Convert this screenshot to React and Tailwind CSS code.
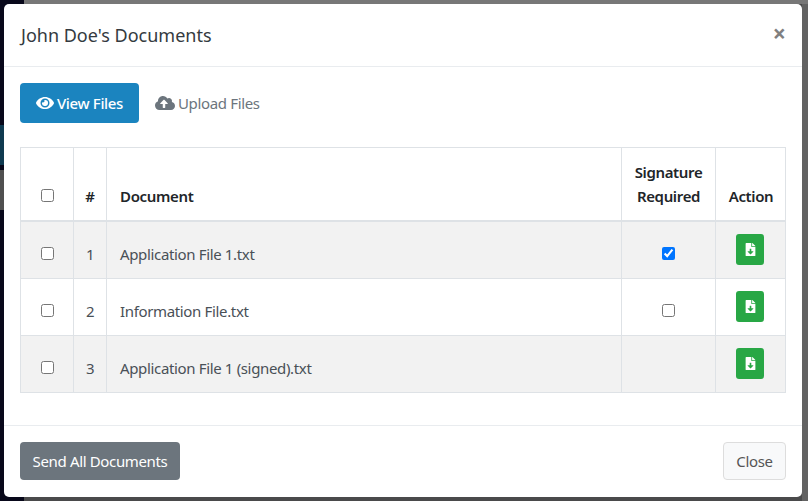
import React from "react";
import { FaEye, FaCloudUploadAlt, FaFileDownload } from "react-icons/fa";

const COLS = "grid grid-cols-[53px_33px_515px_94px_70px]";

function Box({ checked }) {
  return <input type="checkbox" defaultChecked={checked} className="block w-[13px] h-[13px]" />;
}

function Row({ n, name, sig, shaded }) {
  return (
    <div className={COLS + " h-[57px] border-b border-[#dee2e6] text-[#495057] " + (shaded ? "bg-[#f2f2f2]" : "bg-white")}>
      <div className="border-r border-[#dee2e6] flex justify-center pt-[25px]"><Box /></div>
      <div className="border-r border-[#dee2e6] flex justify-center pt-[20px]">{n}</div>
      <div className="border-r border-[#dee2e6] pl-[13px] pt-[20px]">{name}</div>
      <div className="border-r border-[#dee2e6] flex justify-center pt-[25px]">{sig !== undefined && <Box checked={sig} />}</div>
      <div className="flex justify-center pt-[12px] pr-[2px]">
        <span className="w-[28px] h-[31px] bg-[#28a745] rounded-[3px] flex items-center justify-center text-white text-[13px]"><FaFileDownload /></span>
      </div>
    </div>
  );
}

export default function App() {
  return (
    <div className="relative w-[808px] h-[501px] overflow-hidden bg-[#4a4a4b] text-[15px] leading-[24px] font-['Noto_Sans',sans-serif] tracking-[-0.35px]">
      <div className="flex h-full">
        <div className="w-[24px] flex flex-col bg-[#08081a]">
          <div className="h-[125px]" />
          <div className="h-[40px] bg-[#0f3a50]" />
          <div className="h-[5px]" />
          <div className="h-[40px] bg-[#505050]" />
        </div>
        <div className="flex-1 flex flex-col">
          <div className="h-[4px] bg-[#777777]" />
          <div className="flex-1 flex justify-end">
            <div className="w-[6px] bg-[#626262]" />
          </div>
        </div>
      </div>
      <div className="absolute left-[4px] top-[4px] w-[798px] h-[493px] bg-white rounded-[5px] flex flex-col">
        <div className="h-[63px] border-b border-[#e9ecef] flex items-center justify-between pl-[17px] pr-[16px]">
          <h2 className="text-[18px] tracking-normal text-[#343a40]">John Doe's Documents</h2>
          <span className="text-[23px] font-bold tracking-normal text-[#808080] -mt-[5px]">×</span>
        </div>
        <div className="flex-1 px-[16px] pt-[16px]">
          <div className="flex items-center h-[40px] gap-[16px] mb-[24px]">
            <button className="h-[40px] w-[119px] bg-[#1b84bf] rounded-[4px] text-white font-medium flex items-center justify-center gap-[3px]">
              <FaEye className="text-[18px]" /> View Files
            </button>
            <button className="text-[#6c757d] flex items-center gap-[3px]">
              <FaCloudUploadAlt className="text-[20px]" /> Upload Files
            </button>
          </div>
          <div className="w-[766px] border border-[#dee2e6] border-b-0">
            <div className={COLS + " h-[74px] border-b-2 border-[#dee2e6] font-semibold text-[#212529]"}>
              <div className="border-r border-[#dee2e6] flex justify-center pt-[41px]"><Box /></div>
              <div className="border-r border-[#dee2e6] flex justify-center items-end pb-[12px]">#</div>
              <div className="border-r border-[#dee2e6] pl-[13px] flex items-end pb-[12px]">Document</div>
              <div className="border-r border-[#dee2e6] flex items-end justify-center text-center pb-[12px]">Signature<br />Required</div>
              <div className="flex justify-center items-end pb-[12px]">Action</div>
            </div>
            <Row n="1" name="Application File 1.txt" sig={true} shaded />
            <Row n="2" name="Information File.txt" sig={false} />
            <Row n="3" name="Application File 1 (signed).txt" shaded />
          </div>
        </div>
        <div className="h-[72px] border-t border-[#e9ecef] flex items-center justify-between px-[16px] pb-[1px]">
          <button className="h-[38px] w-[160px] bg-[#6c757d] text-white rounded-[4px]">Send All Documents</button>
          <button className="h-[38px] w-[63px] bg-[#f8f9fa] border border-[#ddd] text-[#555] rounded-[4px]">Close</button>
        </div>
      </div>
    </div>
  );
}
